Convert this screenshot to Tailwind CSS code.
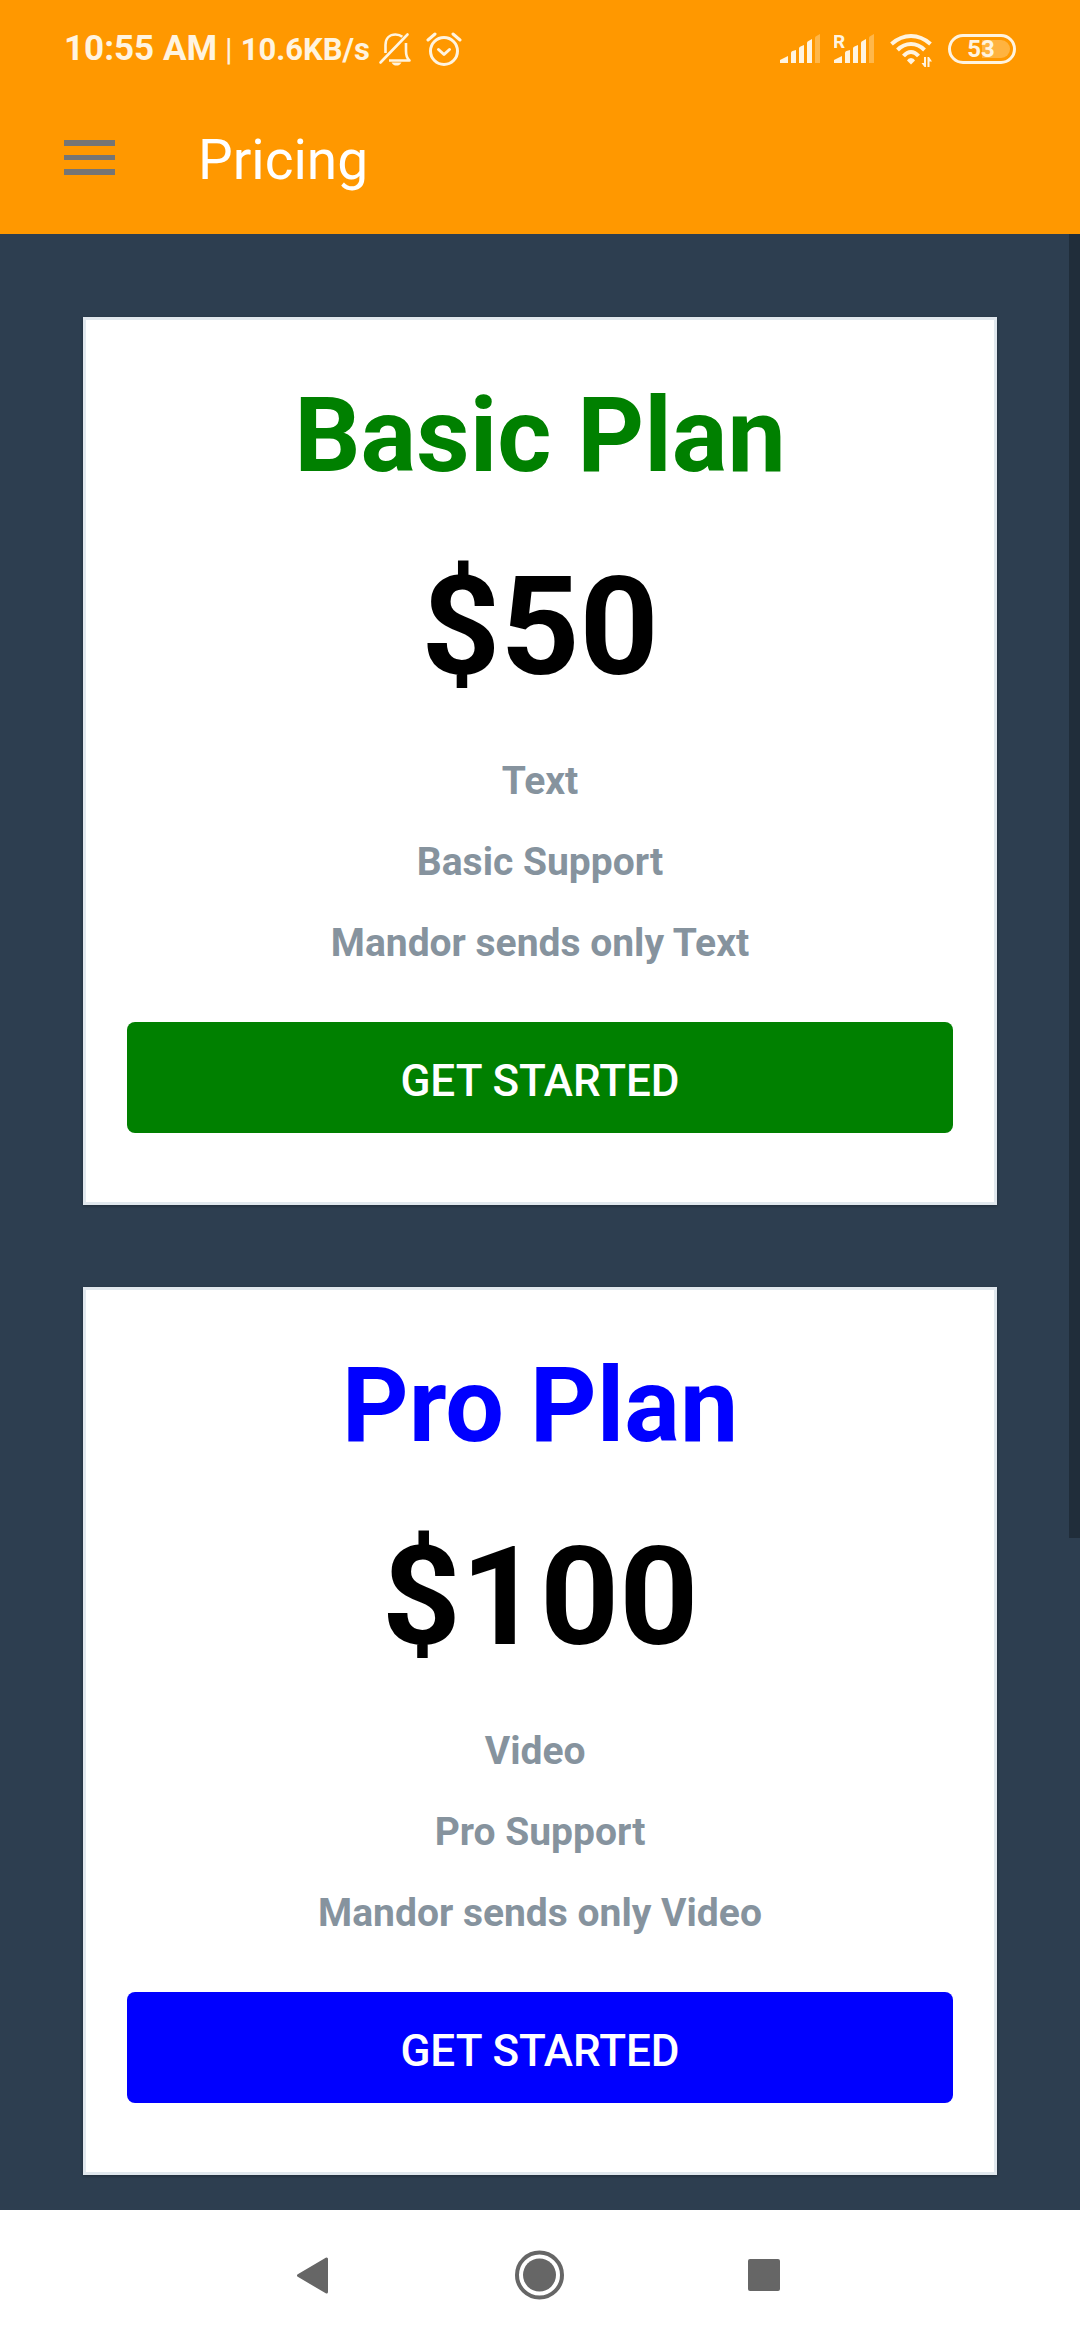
<!DOCTYPE html>
<html lang="en">
<head>
<meta charset="utf-8">
<meta name="viewport" content="width=device-width, initial-scale=1">
<title>Pricing</title>
<script src="https://cdn.jsdelivr.net/npm/@tailwindcss/browser@4"></script>
</head>
<body class="flex min-h-screen flex-col bg-[#2d3e50] font-['Roboto',sans-serif]">

<header class="bg-[#ff9800]">
  <!-- Status bar -->
  <div class="flex h-[82px] items-center justify-between pt-4 pr-16 pl-16 text-[#fff4e0]">
    <div class="flex items-center">
      <div class="flex items-baseline gap-2 leading-10 font-bold whitespace-nowrap">
        <span class="text-[35px]">10:55 AM</span>
        <span class="text-[31px] font-normal">|</span>
        <span class="text-[31px]">10.6KB/s</span>
      </div>
      <svg class="ml-2 h-9 w-9" viewBox="0 0 36 36" fill="none" stroke="currentColor" stroke-width="2.6" aria-label="Silent">
        <path d="M2.500 31.500L29.500 3.500" stroke-linecap="round"/>
        <path d="M7.500 22V14C7.500 7 12 3.500 17.500 3.500C20.500 3.500 22.500 4.300 24.300 5.800"/>
        <path d="M11 29.500H31.500C28.500 27 28 24 28 20V12" stroke-linejoin="round"/>
        <path d="M13.500 31.500H23.500C22 34 20.500 34.500 18.500 34.500C16.500 34.500 15 34 13.500 31.500Z" fill="currentColor" stroke="none"/>
      </svg>
      <svg class="ml-3 h-9 w-9" viewBox="0 0 36 36" fill="none" stroke="currentColor" stroke-width="3" stroke-linecap="round" aria-label="Alarm">
        <circle cx="18" cy="20" r="13.500"/>
        <path d="M12.500 18.500L18 23.500L23.500 18.500" stroke-linejoin="round"/>
        <path d="M2 9L9 3M27 3L34 9"/>
      </svg>
    </div>
    <div class="flex items-center">
      <svg class="h-9 w-10" viewBox="0 0 40 36" fill="currentColor" aria-label="Signal">
        <path d="M0 32V29L8 25V32ZM11 32V22Q11 20.500 12.500 20L16 19V32ZM19 32V17.500Q19 16 20.500 15.500L24 14V32ZM27 32V12Q27 10.500 28.500 10L32 8V32Z"/>
        <path d="M35 32V7Q35 5.500 36.500 5L40 3V32Z" fill="#ffb74a"/>
      </svg>
      <svg class="ml-3.5 h-9 w-10" viewBox="0 0 40 36" fill="currentColor" aria-label="Roaming signal">
        <text x="-1" y="17" font-size="19" font-weight="700">R</text>
        <path d="M0 32V29L8 25V32ZM11 32V22Q11 20.500 12.500 20L16 19V32ZM19 32V17.500Q19 16 20.500 15.500L24 14V32ZM27 32V12Q27 10.500 28.500 10L32 8V32Z"/>
        <path d="M35 32V7Q35 5.500 36.500 5L40 3V32Z" fill="#ffb74a"/>
      </svg>
      <svg class="ml-4 h-9 w-11" viewBox="0 0 44 36" fill="none" stroke="currentColor" stroke-width="4" aria-label="Wi-Fi">
        <path d="M1.500 13Q10.500 5 21 5Q31.500 5 40.500 13"/>
        <path d="M7.500 19Q13.500 13 21 13Q28.500 13 34.500 19"/>
        <path d="M13.500 25Q17 21 21 21Q25 21 28.500 25"/>
        <path d="M17 29.500Q18 27 21 27Q24 27 25 29.500L21 33.500Z" fill="currentColor" stroke="none"/>
        <path d="M36 26V36H34.500L31.500 32H34V26ZM37.500 36V26H39L42 30.500H39.500V36Z" fill="currentColor" stroke="none"/>
      </svg>
      <div class="ml-3.5 flex h-[30px] w-[68px] items-center rounded-full border-[3px] border-current p-[3px]">
        <div class="flex h-[18px] w-full items-center justify-center rounded-full bg-gradient-to-r from-[#ff9800] from-50% to-[#ffb340] to-50% pr-0.5 text-2xl leading-6 font-bold">53</div>
      </div>
    </div>
  </div>
  <!-- Toolbar -->
  <div class="flex h-38 items-center gap-[83px] px-16">
    <button type="button" aria-label="Open menu">
      <svg class="h-[51px] w-[51px]" viewBox="0 0 51 51" fill="#757575"><path d="M0 7H51V13H0ZM0 22H51V27H0ZM0 36H51V42H0Z"/></svg>
    </button>
    <h1 class="pt-1 text-[55px] leading-16 text-white">Pricing</h1>
  </div>
</header>

<main class="relative flex flex-1 flex-col gap-[82px] px-[83px] pt-[83px] pb-[35px] text-center">
  <section class="border-3 border-[#e1e8ee] bg-white px-[41px] pt-[41px] pb-[69px] shadow-[0_1px_3px_rgba(0,0,0,0.3)]">
    <h2 class="text-[104px] leading-[149px] font-bold text-[#008000]">Basic Plan</h2>
    <p class="mt-9 text-[138px] leading-[162px] font-bold text-black">$50</p>
    <ul class="mt-[50px] flex flex-col gap-[35px] text-[39px] leading-[46px] font-bold text-[#86939e]">
      <li>Text</li>
      <li>Basic Support</li>
      <li>Mandor sends only Text</li>
    </ul>
    <button type="button" class="mt-14 flex h-[111px] w-full items-center justify-center rounded-lg bg-[#008000] pt-1.5 text-[44px] font-medium text-white">GET STARTED</button>
  </section>

  <section class="border-3 border-[#e1e8ee] bg-white px-[41px] pt-[41px] pb-[69px] shadow-[0_1px_3px_rgba(0,0,0,0.3)]">
    <h2 class="text-[104px] leading-[149px] font-bold text-[#0000ff]">Pro Plan</h2>
    <p class="mt-9 text-[138px] leading-[162px] font-bold text-black">$100</p>
    <ul class="mt-[50px] flex flex-col gap-[35px] text-[39px] leading-[46px] font-bold text-[#86939e]">
      <li>Video&nbsp;</li>
      <li>Pro Support</li>
      <li>Mandor sends only Video</li>
    </ul>
    <button type="button" class="mt-14 flex h-[111px] w-full items-center justify-center rounded-lg bg-[#0000ff] pt-1.5 text-[44px] font-medium text-white">GET STARTED</button>
  </section>

  <!-- Scroll indicator -->
  <div class="absolute top-0 right-0 h-[66%] w-[11px] bg-[#202d3a]"></div>
</main>

<nav class="flex h-[130px] items-center justify-center gap-44 bg-white text-[#666666]" aria-label="System navigation">
  <button type="button" aria-label="Back">
    <svg class="h-[50px] w-[50px]" viewBox="0 0 50 50" fill="currentColor" stroke="currentColor" stroke-width="3" stroke-linejoin="round"><path d="M9.500 25.500L37.500 9V42Z"/></svg>
  </button>
  <button type="button" aria-label="Home">
    <svg class="h-[50px] w-[50px]" viewBox="0 0 50 50" fill="currentColor"><circle cx="24.500" cy="25" r="16.500"/><circle cx="24.500" cy="25" r="22.500" fill="none" stroke="currentColor" stroke-width="4"/></svg>
  </button>
  <button type="button" aria-label="Recent apps">
    <svg class="h-[50px] w-[50px]" viewBox="0 0 50 50" fill="currentColor"><rect x="7" y="9" width="32" height="32" rx="2"/></svg>
  </button>
</nav>

</body>
</html>
